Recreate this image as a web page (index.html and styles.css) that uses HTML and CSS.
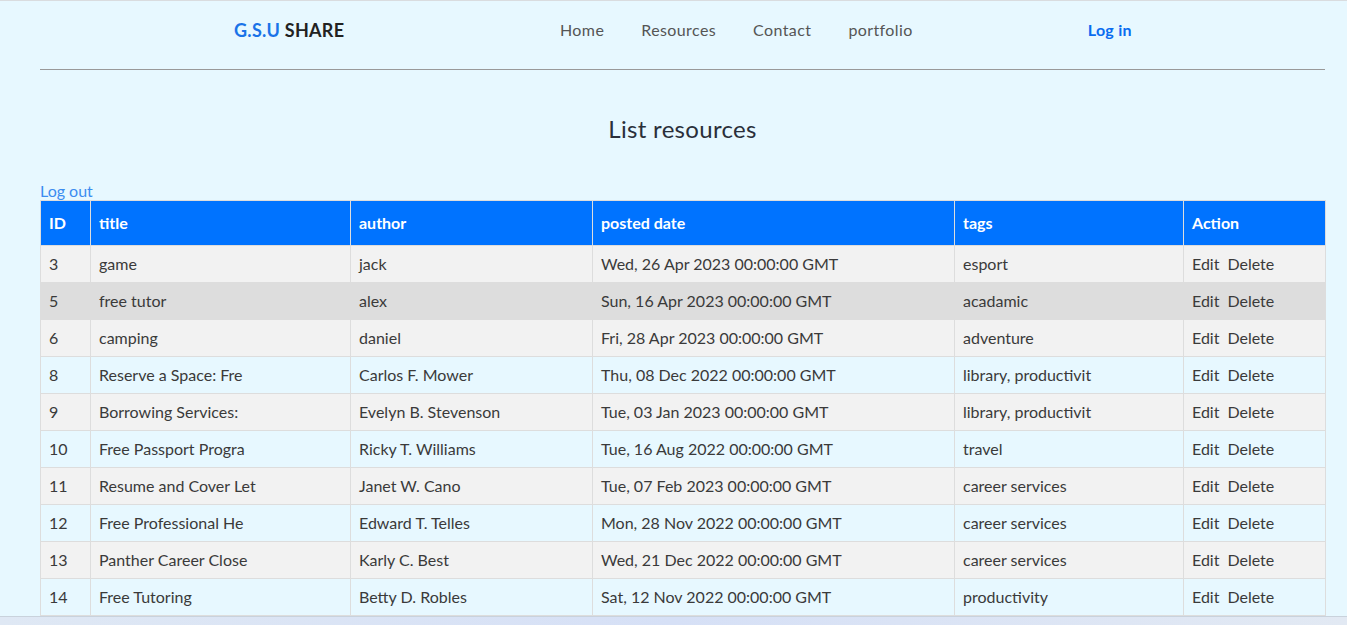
FILE: index.html
```html
<!DOCTYPE html>
<html lang="en">
<head>
<meta charset="utf-8">
<title>G.S.U SHARE</title>
<link rel="stylesheet" href="styles.css">
</head>
<body>
<div class="page">
  <header class="topbar">
    <div class="logo"><span class="logo-gsu">G.S.U</span> SHARE</div>
    <nav class="nav">
      <a href="#">Home</a>
      <a href="#">Resources</a>
      <a href="#">Contact</a>
      <a href="#">portfolio</a>
    </nav>
    <a class="login" href="#">Log in</a>
  </header>
  <main class="content">
    <h1 class="title">List resources</h1>
    <a class="logout" href="#">Log out</a>
    <table class="resources">
      <colgroup>
        <col class="c-id"><col class="c-title"><col class="c-author"><col class="c-date"><col class="c-tags"><col class="c-action">
      </colgroup>
      <thead>
        <tr><th>ID</th><th>title</th><th>author</th><th>posted date</th><th>tags</th><th>Action</th></tr>
      </thead>
      <tbody>
        <tr class="odd"><td>3</td><td>game</td><td>jack</td><td>Wed, 26 Apr 2023 00:00:00 GMT</td><td>esport</td><td><a href="#">Edit</a><a href="#">Delete</a></td></tr>
        <tr class="hover"><td>5</td><td>free tutor</td><td>alex</td><td>Sun, 16 Apr 2023 00:00:00 GMT</td><td>acadamic</td><td><a href="#">Edit</a><a href="#">Delete</a></td></tr>
        <tr class="odd"><td>6</td><td>camping</td><td>daniel</td><td>Fri, 28 Apr 2023 00:00:00 GMT</td><td>adventure</td><td><a href="#">Edit</a><a href="#">Delete</a></td></tr>
        <tr><td>8</td><td>Reserve a Space: Fre</td><td>Carlos F. Mower</td><td>Thu, 08 Dec 2022 00:00:00 GMT</td><td>library, productivit</td><td><a href="#">Edit</a><a href="#">Delete</a></td></tr>
        <tr class="odd"><td>9</td><td>Borrowing Services:</td><td>Evelyn B. Stevenson</td><td>Tue, 03 Jan 2023 00:00:00 GMT</td><td>library, productivit</td><td><a href="#">Edit</a><a href="#">Delete</a></td></tr>
        <tr><td>10</td><td>Free Passport Progra</td><td>Ricky T. Williams</td><td>Tue, 16 Aug 2022 00:00:00 GMT</td><td>travel</td><td><a href="#">Edit</a><a href="#">Delete</a></td></tr>
        <tr class="odd"><td>11</td><td>Resume and Cover Let</td><td>Janet W. Cano</td><td>Tue, 07 Feb 2023 00:00:00 GMT</td><td>career services</td><td><a href="#">Edit</a><a href="#">Delete</a></td></tr>
        <tr><td>12</td><td>Free Professional He</td><td>Edward T. Telles</td><td>Mon, 28 Nov 2022 00:00:00 GMT</td><td>career services</td><td><a href="#">Edit</a><a href="#">Delete</a></td></tr>
        <tr class="odd"><td>13</td><td>Panther Career Close</td><td>Karly C. Best</td><td>Wed, 21 Dec 2022 00:00:00 GMT</td><td>career services</td><td><a href="#">Edit</a><a href="#">Delete</a></td></tr>
        <tr><td>14</td><td>Free Tutoring</td><td>Betty D. Robles</td><td>Sat, 12 Nov 2022 00:00:00 GMT</td><td>productivity</td><td><a href="#">Edit</a><a href="#">Delete</a></td></tr>
      </tbody>
    </table>
  </main>
</div>
<div class="bottom-strip"></div>
</body>
</html>
```

FILE: styles.css
```css
html {
  scrollbar-width: none;
  overflow: hidden;
}
body {
  margin: 0;
  background: #e7f8ff;
  font-family: "Lato", "Noto Sans", sans-serif;
  font-size: 16px;
  color: #333;
}
.page {
  border-top: 1px solid #d9dcdf;
  padding: 0 22px 0 40px;
}
.topbar {
  box-sizing: border-box;
  display: flex;
  align-items: center;
  height: 69px;
  padding: 0 0 11px 194px;
  border-bottom: 1px solid #999;
}
.logo {
  font-weight: 700;
  font-size: 18px;
  letter-spacing: 0.3px;
  color: #222;
  width: 326px;
}
.logo-gsu {
  color: #1a73e8;
}
.nav {
  display: flex;
  gap: 37px;
}
.nav a {
  color: #555;
  text-decoration: none;
  font-size: 16px;
  letter-spacing: 0.4px;
}
.login {
  margin-left: 175px;
  color: #0a6cf0;
  font-weight: 700;
  letter-spacing: 0.3px;
  text-decoration: none;
}
.content {
  padding-top: 44px;
}
.title {
  margin: 0;
  text-align: center;
  font-weight: 400;
  font-size: 24px;
  letter-spacing: 0.3px;
  color: #2a2f3a;
  line-height: 30px;
}
.logout {
  display: block;
  margin-top: 37px;
  color: #3b8cf0;
  text-decoration: none;
  line-height: 19px;
}
.resources {
  width: 100%;
  border-collapse: collapse;
  table-layout: fixed;
}
.c-id { width: 50px; }
.c-title { width: 260px; }
.c-author { width: 242px; }
.c-date { width: 362px; }
.c-tags { width: 229px; }
.c-action { width: 142px; }
.resources th,
.resources td {
  border: 1px solid #ddd;
  padding: 8px;
  text-align: left;
  white-space: nowrap;
  overflow: hidden;
  line-height: 20px;
}
.resources th {
  background: #0073ff;
  color: #fff;
  font-weight: 700;
  padding-top: 12px;
  padding-bottom: 12px;
}
.resources td {
  color: #3a3a3a;
}
.resources tr.odd {
  background: #f2f2f2;
}
.resources tr.hover {
  background: #dddddd;
}
.resources td a {
  color: #3a3a3a;
  text-decoration: none;
}
.resources td a + a {
  margin-left: 8px;
}
.bottom-strip {
  position: fixed;
  left: 0;
  right: 0;
  bottom: 0;
  height: 8px;
  border-top: 1px solid #c9d2dc;
  background: linear-gradient(90deg, #dfe8f4, #d6e0f6 50%, #e2e9f3);
}
```
